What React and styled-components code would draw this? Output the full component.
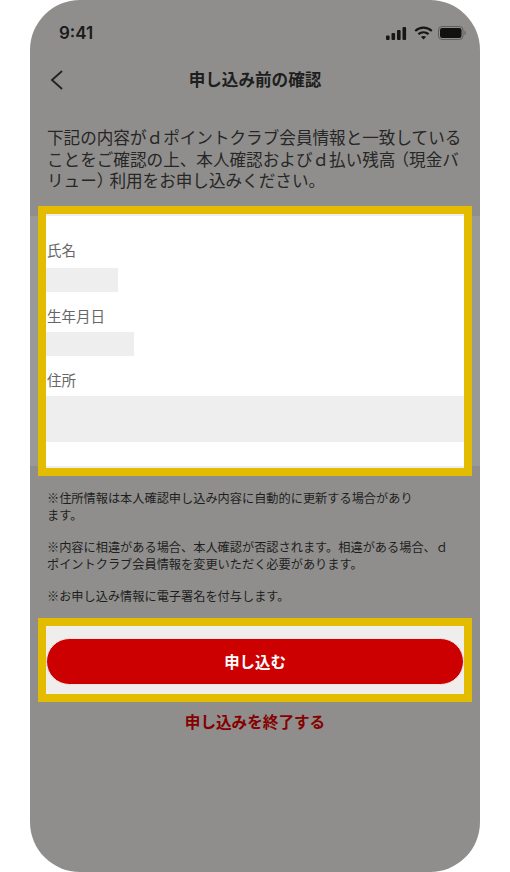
import React from "react";
import styled, { createGlobalStyle } from "styled-components";

const Global = createGlobalStyle`
  html, body { margin: 0; padding: 0; background: #fff; }
  * { box-sizing: border-box; }
  body { font-family: "Noto Sans CJK JP", "Noto Sans", sans-serif; }
`;

const Phone = styled.div`
  width: 450px;
  height: 872px;
  margin-left: 30px;
  background: #8f8e8c;
  border-radius: 50px;
  overflow: hidden;
  color: #232323;
`;

const StatusBar = styled.div`
  height: 66px;
  display: flex;
  align-items: center;
  justify-content: space-between;
  padding: 0 14px 0 29px;
`;

const Time = styled.span`
  font-family: Inter, "Liberation Sans", sans-serif;
  font-size: 17px;
  font-weight: 600;
  color: #1a1a1a;
`;

const StatusIcons = styled.div`
  display: flex;
  align-items: center;
  gap: 5px;
`;

const Header = styled.header`
  position: relative;
  height: 28px;
  display: flex;
  align-items: center;
  justify-content: center;
`;

const BackIcon = styled.svg`
  position: absolute;
  left: 19px;
  top: 3px;
`;

const Title = styled.h1`
  margin: 0 0 2px;
  font-size: 16.6px;
  font-weight: 700;
  line-height: 26px;
  color: #1e1e1e;
`;

const Intro = styled.p`
  margin: 0;
  padding: 33px 16px 0 17px;
  height: 122px;
  font-size: 16.6px;
  line-height: 21.5px;
  color: #262626;
  white-space: nowrap;
`;

const Paren = styled.span`
  margin-left: ${(p) => (p.$open ? "-3px" : "0")};
  margin-right: ${(p) => (p.$open ? "0" : "-4px")};
`;

const Band = styled.section`
  display: flow-root;
  height: 250px;
  background: #999998;
  padding: 0 16px;
`;

const Card = styled.div`
  height: 254px;
  margin-top: -2px;
  padding-top: 23px;
  background: #fff;
  border-top: 2px solid #eeeeee;
  border-bottom: 2px solid #eeeeee;
  outline: 8px solid #e3bc00;
  display: flex;
  flex-direction: column;
`;

const Label = styled.div`
  flex: none;
  height: ${(p) => p.$height}px;
  margin-left: 1px;
  font-size: 14.5px;
  line-height: 22px;
  color: #666;
`;

const Mask = styled.div`
  flex: none;
  width: ${(p) => p.$width};
  height: ${(p) => p.$height}px;
  margin-bottom: ${(p) => p.$after}px;
  background: #eeeeee;
`;

const Notes = styled.div`
  padding: 24px 16px 0 17px;
  height: 160px;
  font-size: 12.2px;
  line-height: 17px;
  color: #1e1e1e;
  white-space: nowrap;
`;

const Note = styled.p`
  margin: 0 0 15px;
`;

const ActionBox = styled.div`
  height: 68px;
  margin: 0 16px;
  padding-top: 12px;
  background: #efeeec;
  outline: 8px solid #e3bc00;
`;

const PrimaryButton = styled.button`
  display: block;
  width: 100%;
  height: 47px;
  border: 1px solid #f3e4e4;
  border-radius: 24px;
  background: #cc0000;
  color: #fff;
  font-family: inherit;
  font-size: 15.4px;
  font-weight: 700;
  padding: 0 0 2px;
`;

const EndLink = styled.a`
  display: block;
  margin-top: 15px;
  text-align: center;
  font-size: 15.6px;
  font-weight: 700;
  line-height: 24px;
  color: #850000;
`;

export default function App() {
  return (
    <>
      <Global />
      <Phone>
        <StatusBar>
          <Time>9:41</Time>
          <StatusIcons>
            <svg width="23" height="13" viewBox="0 0 23 13" fill="#161616">
              <rect x="0" y="8.5" width="3.6" height="4.5" rx="1" />
              <rect x="5.5" y="6" width="3.6" height="7" rx="1" />
              <rect x="11" y="3" width="3.6" height="10" rx="1" />
              <rect x="16.5" y="0" width="3.6" height="13" rx="1" />
            </svg>
            <svg width="19" height="14" viewBox="0 0 19 14" fill="none" stroke="#161616" strokeWidth="2.2">
              <path d="M1.2 5 C6 .6 13 .6 17.8 5" />
              <path d="M4.4 8.2 C7.4 5.6 11.6 5.6 14.6 8.2" />
              <path d="M9.5 13.4 L6.9 10.8 C8.4 9.7 10.6 9.7 12.1 10.8 Z" fill="#161616" stroke="none" />
            </svg>
            <svg width="28" height="14" viewBox="0 0 28 14" fill="none">
              <rect x="0.5" y="0.5" width="24.5" height="13" rx="3.5" stroke="#5f5e5c" />
              <rect x="2" y="2" width="21.5" height="10" rx="2.2" fill="#111" />
              <path d="M26.4 4.8 C27.4 5.1 28 6 28 7 C28 8 27.4 8.9 26.4 9.2 Z" fill="#6b6a68" />
            </svg>
          </StatusIcons>
        </StatusBar>
        <Header>
          <BackIcon width="14" height="22" viewBox="0 0 14 22" fill="none" stroke="#232323" strokeWidth="1.9" strokeLinecap="round">
            <path d="M12.5 2.5 L3 11 L12.5 19.5" />
          </BackIcon>
          <Title>申し込み前の確認</Title>
        </Header>
        <Intro>
          下記の内容がｄポイントクラブ会員情報と一致している
          <br />
          ことをご確認の上、本人確認およびｄ払い残高<Paren $open>（</Paren>現金バ
          <br />
          リュー<Paren>）</Paren>利用をお申し込みください。
        </Intro>
        <Band>
          <Card>
            <Label $height={29}>氏名</Label>
            <Mask $width="72px" $height={24} $after={13} />
            <Label $height={27}>生年月日</Label>
            <Mask $width="88px" $height={24} $after={13} />
            <Label $height={27}>住所</Label>
            <Mask $width="100%" $height={46} $after={0} />
          </Card>
        </Band>
        <Notes>
          <Note>
            ※住所情報は本人確認申し込み内容に自動的に更新する場合があり
            <br />
            ます。
          </Note>
          <Note>
            ※内容に相違がある場合、本人確認が否認されます。相違がある場合、ｄ
            <br />
            ポイントクラブ会員情報を変更いただく必要があります。
          </Note>
          <Note>※お申し込み情報に電子署名を付与します。</Note>
        </Notes>
        <ActionBox>
          <PrimaryButton>申し込む</PrimaryButton>
        </ActionBox>
        <EndLink>申し込みを終了する</EndLink>
      </Phone>
    </>
  );
}
